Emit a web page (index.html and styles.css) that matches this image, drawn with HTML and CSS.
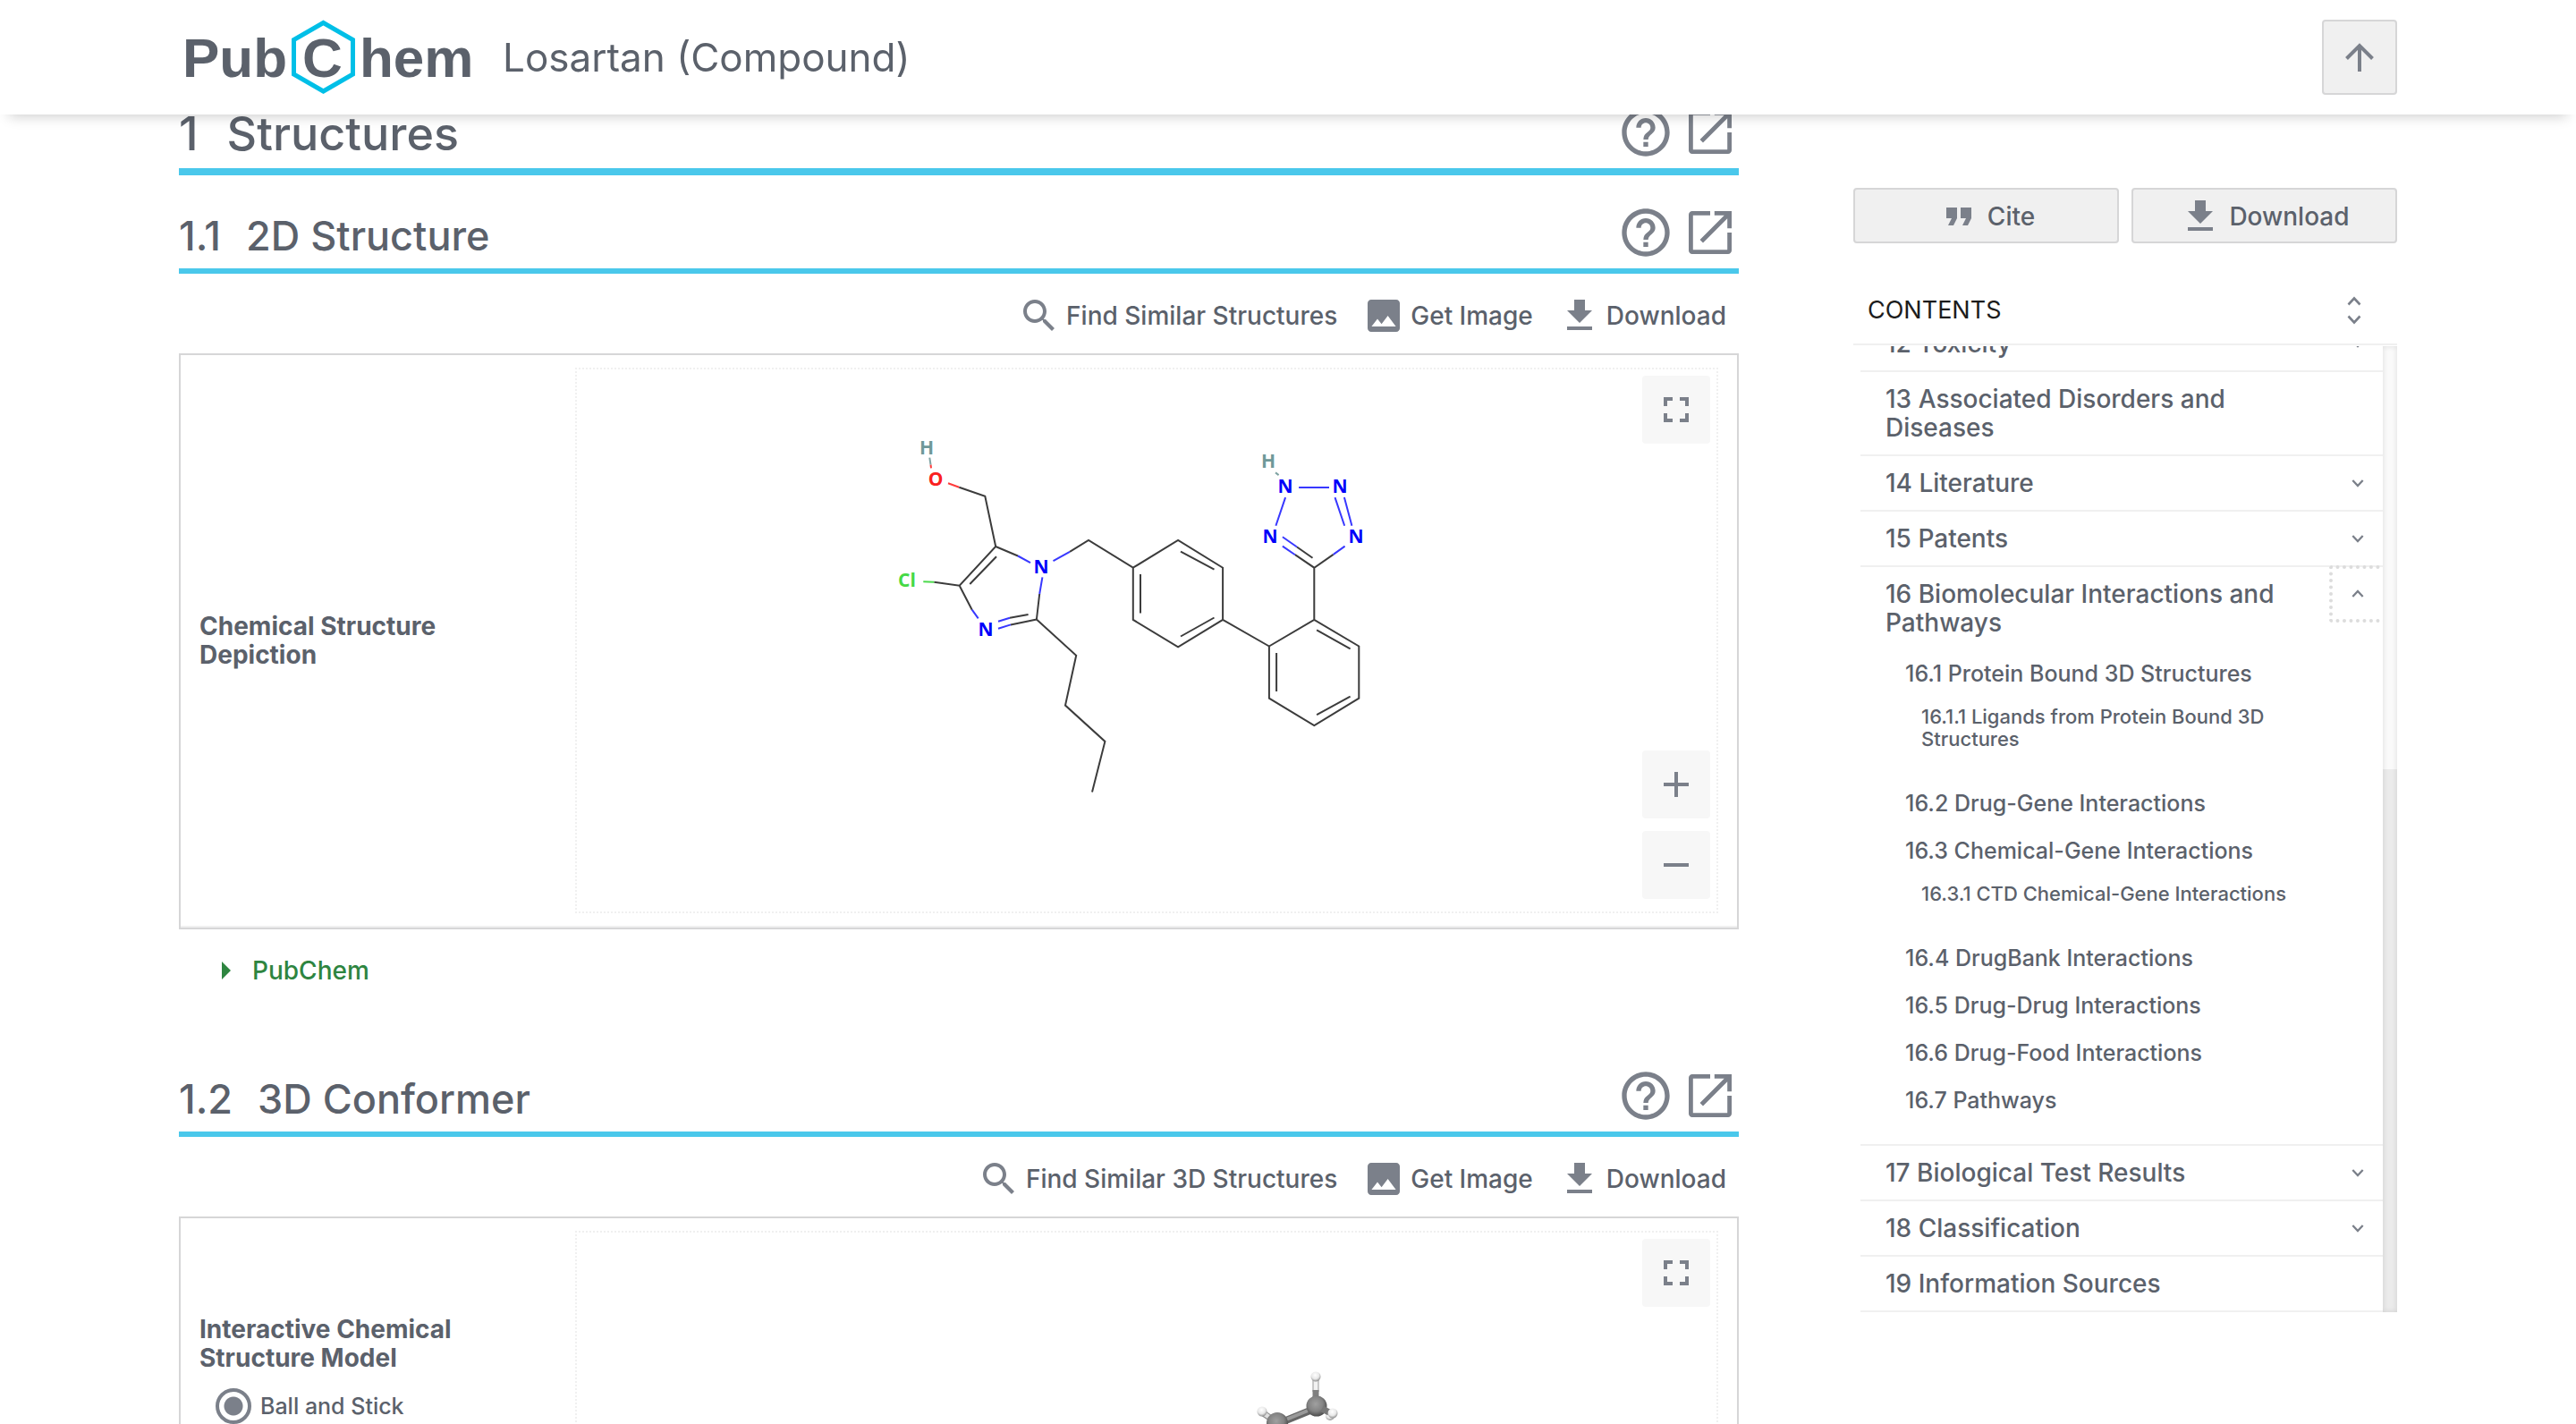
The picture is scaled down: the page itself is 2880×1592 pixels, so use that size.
FILE: index.html
```html
<!DOCTYPE html>
<html lang="en">
<head>
<meta charset="utf-8">
<title>Losartan (Compound) - PubChem</title>
<link rel="stylesheet" href="styles.css">
</head>
<body>
<svg class="sprite" aria-hidden="true">
  <symbol id="i-help" viewBox="0 0 24 24"><path d="M11 18h2v-2h-2v2zm1-16C6.480 2 2 6.480 2 12s4.480 10 10 10 10-4.480 10-10S17.520 2 12 2zm0 18c-4.410 0-8-3.590-8-8s3.590-8 8-8 8 3.590 8 8-3.590 8-8 8zm0-14c-2.210 0-4 1.790-4 4h2c0-1.100.9-2 2-2s2 .9 2 2c0 2-3 1.750-3 5h2c0-2.250 3-2.500 3-5 0-2.210-1.790-4-4-4z"/></symbol>
  <symbol id="i-open" viewBox="0 0 24 24"><path d="M19.200 19.200H4.800V4.800H12V3H4.500C3.600 3 3 3.700 3 4.500v15c0 .8.600 1.500 1.500 1.500h15c.8 0 1.500-.7 1.500-1.500V12h-1.800v7.200zM13.800 3v1.800h4.100L7.700 15l1.300 1.300L19.200 6.100v4.100H21V3h-7.200z"/></symbol>
  <symbol id="i-search" viewBox="0 0 24 24"><path d="M15.500 14h-.79l-.28-.27C15.410 12.590 16 11.110 16 9.500 16 5.910 13.090 3 9.500 3S3 5.910 3 9.500 5.910 16 9.500 16c1.610 0 3.090-.59 4.230-1.570l.27.28v.79l5 4.990L20.490 19l-4.990-5zm-6 0C7.010 14 5 11.990 5 9.500S7.010 5 9.500 5 14 7.010 14 9.500 11.990 14 9.500 14z"/></symbol>
  <symbol id="i-image" viewBox="0 0 24 24"><path d="M21 19V5c0-1.100-.9-2-2-2H5c-1.100 0-2 .9-2 2v14c0 1.100.9 2 2 2h14c1.100 0 2-.9 2-2zM5.200 18l3.300-4.300 2.300 2.900 3.500-4.600L18.800 18H5.200z"/></symbol>
  <symbol id="i-download" viewBox="0 0 24 24"><path d="M19 9h-4V3H9v6H5l7 7 7-7zM5 18v2h14v-2H5z"/></symbol>
  <symbol id="i-quote" viewBox="0 0 24 24"><path d="M6 17h3l2-4V7H5v6h3zm8 0h3l2-4V7h-6v6h3z"/></symbol>
  <symbol id="i-full" viewBox="0 0 24 24"><path d="M7 14H5v5h5v-2H7v-3zm-2-4h2V7h3V5H5v5zm12 7h-3v2h5v-5h-2v3zM14 5v2h3v3h2V5h-5z"/></symbol>
  <symbol id="i-plus" viewBox="0 0 24 24"><path d="M19 13h-6v6h-2v-6H5v-2h6V5h2v6h6v2z"/></symbol>
  <symbol id="i-minus" viewBox="0 0 24 24"><path d="M19 13H5v-2h14v2z"/></symbol>
  <symbol id="i-down" viewBox="0 0 16 16"><path d="M1.500 4.500L8 11.500l6.500-7" fill="none" stroke="currentColor" stroke-width="2.600"/></symbol>
  <symbol id="i-up" viewBox="0 0 16 16"><path d="M1.500 11.500L8 4.500l6.500 7" fill="none" stroke="currentColor" stroke-width="2.600"/></symbol>
</svg>

<header class="topbar">
  <div class="topbar-inner">
    <a class="logo" href="#" aria-label="PubChem">
      <svg viewBox="0 0 340 84" width="340" height="84">
        <path class="hex" d="M159.500 3.500L192.500 22.500V61L159.500 80L126.500 61V22.500Z"/>
        <text x="2" y="64">Pub</text>
        <text x="136" y="64">C</text>
        <text x="200" y="64">hem</text>
      </svg>
    </a>
    <h1 class="title">Losartan (Compound)</h1>
    <button class="to-top" aria-label="Back to top">
      <svg viewBox="0 0 32 32" width="32" height="32"><path d="M16 32V3M1.500 17.500L16 3l14.500 14.500" fill="none" stroke="currentColor" stroke-width="4"/></svg>
    </button>
  </div>
</header>

<div class="page">
  <main class="content">
    <div class="heading heading-top">
      <h2><span class="num">1</span>Structures</h2>
      <div class="heading-tools">
        <a href="#" aria-label="Help"><svg><use href="#i-help"/></svg></a>
        <a href="#" aria-label="Open in new window"><svg><use href="#i-open"/></svg></a>
      </div>
    </div>

    <section class="section">
      <div class="heading">
        <h3><span class="num">1.1</span>2D Structure</h3>
        <div class="heading-tools">
          <a href="#" aria-label="Help"><svg><use href="#i-help"/></svg></a>
          <a href="#" aria-label="Open in new window"><svg><use href="#i-open"/></svg></a>
        </div>
      </div>
      <div class="toolbar">
        <button><svg><use href="#i-search"/></svg>Find Similar Structures</button>
        <button><svg><use href="#i-image"/></svg>Get Image</button>
        <button><svg><use href="#i-download"/></svg>Download</button>
      </div>
      <div class="card">
        <div class="card-label centered"><strong>Chemical Structure Depiction</strong></div>
        <div class="viewer">
          <svg class="molecule" viewBox="979 413 606 606" role="img" aria-label="Losartan 2D structure">
            <g class="c">
              <path d="M1072.300 544.700L1101.300 554.700L1113.200 611L1072.700 654.700L1044.300 650.700M1114 622.300L1084.300 653M1072.700 654.700L1086.700 681.700M1113.200 611L1138 621.500M1158.900 692.500L1162.200 664M1158.900 692.500L1130 698.400M1149.600 686.900L1129 690.800"/>
              <path d="M1196 616.800L1217 604L1266.800 634.700L1317.100 604L1367.100 634.700V692.900L1317.100 723.300L1266.800 692.900V634.700M1275 641.900V685.400M1320 616.600L1357.500 636.700M1357.500 690.500L1320 711.500M1367.100 692.900L1418.900 722.500"/>
              <path d="M1418.900 722.500L1469.300 692.900L1519.300 722.500V780.700L1469.300 811.100L1418.900 780.700ZM1427.100 730V773.100M1472.100 704.300L1509.600 725.300M1509.600 778.700L1472.100 799.200M1469.300 692.900V634.700M1490.700 619.900L1469.300 634.700L1447.900 620.200M1467.500 623.700L1450 611.500"/>
              <path d="M1158.900 692.500L1203.200 732.800L1191 788.600L1235.400 828.900L1221 885.400"/>
            </g>
            <g class="n">
              <path d="M1138 621.500L1152 629.200M1177.500 627.200L1196 616.800M1165.400 645.400L1162.200 664M1130 698.400L1116 702.800M1129 690.800L1116 694.800M1086.700 681.700L1093.700 691.300"/>
              <path d="M1490.700 619.900L1503.600 610.600M1447.900 620.200L1433.900 610.600M1450 611.500L1433.900 600.300M1452.100 545H1486M1437.100 556.100L1426.400 587.700M1502.900 556.100L1511.400 587.700M1492.500 556.100L1503.200 587.700"/>
            </g>
            <path class="o" d="M1060 540.300L1072.300 544.700M1040.500 519.500L1041 523.300"/>
            <path class="cl" d="M1032.300 650.300L1044.300 650.700"/>
            <path class="h" d="M1039.300 511.700L1040.500 519.500M1426 528.400L1429.600 531.100"/>
            <text class="tn" x="1164" y="641">N</text>
            <text class="tn" x="1102" y="711">N</text>
            <text class="tn" x="1437" y="551">N</text>
            <text class="tn" x="1498" y="551">N</text>
            <text class="tn" x="1420" y="607">N</text>
            <text class="tn" x="1516" y="607">N</text>
            <text class="to" x="1046" y="543">O</text>
            <text class="tcl" x="1014" y="656">Cl</text>
            <text class="th" x="1036" y="508">H</text>
            <text class="th" x="1418" y="523">H</text>
          </svg>
          <div class="viewer-top"><button aria-label="Full screen"><svg><use href="#i-full"/></svg></button></div>
          <div class="viewer-bottom">
            <button aria-label="Zoom in"><svg><use href="#i-plus"/></svg></button>
            <button aria-label="Zoom out"><svg><use href="#i-minus"/></svg></button>
          </div>
        </div>
      </div>
      <a class="source" href="#"><svg viewBox="0 0 10 20" width="10" height="20"><path d="M0 0l10 10L0 20z"/></svg>PubChem</a>
    </section>

    <section class="section">
      <div class="heading">
        <h3><span class="num">1.2</span>3D Conformer</h3>
        <div class="heading-tools">
          <a href="#" aria-label="Help"><svg><use href="#i-help"/></svg></a>
          <a href="#" aria-label="Open in new window"><svg><use href="#i-open"/></svg></a>
        </div>
      </div>
      <div class="toolbar">
        <button><svg><use href="#i-search"/></svg>Find Similar 3D Structures</button>
        <button><svg><use href="#i-image"/></svg>Get Image</button>
        <button><svg><use href="#i-download"/></svg>Download</button>
      </div>
      <div class="card">
        <div class="card-label options">
          <strong>Interactive Chemical Structure Model</strong>
          <label class="radio"><input type="radio" name="model" checked>Ball and Stick</label>
        </div>
        <div class="viewer">
          <svg class="molecule" viewBox="979 1378 606 606" role="img" aria-label="Losartan 3D conformer">
            <defs>
              <radialGradient id="carbon" cx="0.450" cy="0.400" r="0.600"><stop offset="0" stop-color="#a0a0a0"/><stop offset="0.600" stop-color="#838383"/><stop offset="1" stop-color="#4c4c4c"/></radialGradient>
              <radialGradient id="hydrogen" cx="0.450" cy="0.350" r="0.650"><stop offset="0" stop-color="#ffffff"/><stop offset="0.600" stop-color="#e8e8e8"/><stop offset="1" stop-color="#8e8e8e"/></radialGradient>
            </defs>
            <path d="M1472 1574L1428 1592" stroke="#666" stroke-width="8"/>
            <path d="M1472 1573L1428 1591" stroke="#999" stroke-width="4"/>
            <path d="M1471 1540V1556" stroke="#999" stroke-width="7"/>
            <path d="M1471 1540V1556" stroke="#f2f2f2" stroke-width="5"/>
            <path d="M1471 1554V1566" stroke="#808080" stroke-width="7"/>
            <circle cx="1471" cy="1539" r="5.500" fill="url(#hydrogen)"/>
            <path d="M1411 1579L1424 1588" stroke="#8e8e8e" stroke-width="7"/>
            <path d="M1411 1579L1420 1585" stroke="#dedede" stroke-width="5"/>
            <circle cx="1411" cy="1578" r="5.500" fill="url(#hydrogen)"/>
            <circle cx="1487" cy="1583" r="5" fill="url(#hydrogen)"/>
            <circle cx="1472" cy="1572" r="11.500" fill="url(#carbon)"/>
            <circle cx="1428" cy="1591" r="12" fill="url(#carbon)"/>
            <path d="M1478 1575L1486 1579" stroke="#777" stroke-width="7"/>
            <circle cx="1490" cy="1580" r="5.500" fill="url(#hydrogen)"/>
          </svg>
          <div class="viewer-top"><button aria-label="Full screen"><svg><use href="#i-full"/></svg></button></div>
        </div>
      </div>
    </section>
  </main>

  <aside class="side">
    <div class="actions">
      <button><svg><use href="#i-quote"/></svg>Cite</button>
      <button><svg><use href="#i-download"/></svg>Download</button>
    </div>
    <div class="contents-head">
      <h2>CONTENTS</h2>
      <button aria-label="Expand or collapse all"><svg><use href="#i-up"/></svg><svg><use href="#i-down"/></svg></button>
    </div>
    <div class="contents">
      <nav class="toc" aria-label="Contents">
        <ul>
          <li><div class="row"><a href="#">12 Toxicity</a><button aria-label="Expand"><svg><use href="#i-down"/></svg></button></div></li>
          <li><div class="row"><a href="#">13 Associated Disorders and Diseases</a></div></li>
          <li><div class="row"><a href="#">14 Literature</a><button aria-label="Expand"><svg><use href="#i-down"/></svg></button></div></li>
          <li><div class="row"><a href="#">15 Patents</a><button aria-label="Expand"><svg><use href="#i-down"/></svg></button></div></li>
          <li>
            <div class="row"><a href="#">16 Biomolecular Interactions and Pathways</a><button class="open" aria-label="Collapse"><svg><use href="#i-up"/></svg></button></div>
            <ul class="level2">
              <li><a href="#">16.1 Protein Bound 3D Structures</a>
                <ul class="level3"><li><a href="#">16.1.1 Ligands from Protein Bound 3D Structures</a></li></ul></li>
              <li><a href="#">16.2 Drug-Gene Interactions</a></li>
              <li><a href="#">16.3 Chemical-Gene Interactions</a>
                <ul class="level3"><li><a href="#">16.3.1 CTD Chemical-Gene Interactions</a></li></ul></li>
              <li><a href="#">16.4 DrugBank Interactions</a></li>
              <li><a href="#">16.5 Drug-Drug Interactions</a></li>
              <li><a href="#">16.6 Drug-Food Interactions</a></li>
              <li><a href="#">16.7 Pathways</a></li>
            </ul>
          </li>
          <li><div class="row"><a href="#">17 Biological Test Results</a><button aria-label="Expand"><svg><use href="#i-down"/></svg></button></div></li>
          <li><div class="row"><a href="#">18 Classification</a><button aria-label="Expand"><svg><use href="#i-down"/></svg></button></div></li>
          <li><div class="row"><a href="#">19 Information Sources</a></div></li>
        </ul>
      </nav>
      <div class="scrollbar"><div class="thumb"></div></div>
    </div>
  </aside>
</div>
</body>
</html>
```
FILE: styles.css
```css
:root {
  --text: #5b616b;
  --icon: #7b808a;
  --accent: #4ac8eb;
  --line: #d6d6d7;
  --soft: #f0f0f0;
}

* { box-sizing: border-box; }

body {
  margin: 0;
  height: 100vh;
  overflow: hidden;
  background: #fff;
  color: var(--text);
  font: 500 28px/36px Inter, "Liberation Sans", sans-serif;
}

h1, h2, h3, ul { margin: 0; padding: 0; font-weight: 500; }
ul { list-style: none; }
a { color: inherit; text-decoration: none; }
svg { display: block; fill: currentColor; flex: none; }
.sprite { position: absolute; width: 0; height: 0; }

button {
  display: flex;
  align-items: center;
  justify-content: center;
  padding: 0;
  border: 0;
  background: none;
  color: var(--text);
  font: inherit;
}
button svg { color: var(--icon); }

/* top bar */
.topbar {
  position: fixed;
  inset: 0 0 auto;
  z-index: 2;
  background: #fff;
  box-shadow: 0 12px 14px -10px rgba(0, 0, 0, 0.2);
}
.topbar-inner {
  display: flex;
  align-items: center;
  height: 128px;
  max-width: 2480px;
  margin: 0 auto;
}
.logo { padding-left: 2px; }
.logo text { font: bold 62px "Liberation Sans", Arial, sans-serif; fill: var(--text); }
.hex { fill: none; stroke: #00bfe7; stroke-width: 5; }
.title { margin-left: 20px; font-size: 44px; line-height: 56px; font-weight: 400; }
.to-top {
  width: 84px;
  height: 84px;
  margin-left: auto;
  border: 2px solid var(--line);
  border-radius: 4px;
  background: var(--soft);
}

/* page columns */
.page {
  display: grid;
  grid-template-columns: minmax(0, 1fr) 608px;
  gap: 128px;
  max-width: 2480px;
  margin: 0 auto;
  padding-top: 116px;
}

/* headings */
.heading {
  display: flex;
  align-items: center;
  justify-content: space-between;
  padding-bottom: 8px;
  border-bottom: 6px solid var(--accent);
}
.heading-top { border-bottom-width: 8px; margin-bottom: 32px; }
.heading h2 { padding-top: 4px; font-size: 52px; line-height: 60px; }
.heading h2 .num { margin-right: 32px; }
.heading h3 { padding-top: 8px; font-size: 45px; line-height: 56px; }
.num { margin-right: 28px; }
.heading-tools { display: flex; gap: 8px; color: var(--icon); }
.heading-tools svg { width: 64px; height: 64px; }

.toolbar {
  display: flex;
  justify-content: flex-end;
  gap: 28px;
  padding: 23px 14px 18px 0;
}
.toolbar button { gap: 6px; }
.toolbar svg { width: 48px; height: 48px; }

/* data card */
.card {
  display: grid;
  grid-template-columns: 420px minmax(0, 1fr);
  padding: 14px 21px 16px;
  border: 2px solid var(--line);
  box-shadow: inset 0 -2px var(--soft);
}
.card-label { line-height: 32px; }
.card-label strong { display: block; width: 300px; font-weight: 700; }
.centered { align-self: center; }
.options { padding-top: 94px; }
.radio {
  display: flex;
  align-items: center;
  gap: 10px;
  margin-top: 18px;
  padding-left: 18px;
  font-size: 25px;
}
.radio input {
  appearance: none;
  width: 40px;
  height: 40px;
  margin: 0;
  border: 4px solid var(--icon);
  border-radius: 50%;
  background: radial-gradient(circle, var(--icon) 10px, transparent 11px);
}

.viewer {
  position: relative;
  display: flex;
  justify-content: center;
  border: 2px dotted var(--soft);
}
.molecule { width: 606px; height: 606px; }
.viewer-top, .viewer-bottom {
  position: absolute;
  right: 7px;
  display: grid;
  gap: 14px;
}
.viewer-top { top: 7px; }
.viewer-bottom { bottom: 14px; }
.viewer button { width: 76px; height: 76px; border-radius: 4px; background: #f7f7f7; }
.viewer button svg { width: 48px; height: 48px; }

.molecule .c, .molecule .n, .o, .cl, .h { fill: none; stroke-width: 2; }
.c { stroke: #3c3c3c; }
.n { stroke: #3838ff; }
.o { stroke: #ff3c3c; }
.cl { stroke: #4cd94c; }
.h { stroke: #7fa3a3; }
.molecule text { font: bold 21px "Open Sans", "DejaVu Sans", sans-serif; text-anchor: middle; }
.tn { fill: #0000fa; }
.to { fill: #fa2020; }
.tcl { fill: #45d945; }
.th { fill: #6f9999; }

.source {
  display: flex;
  align-items: center;
  gap: 24px;
  margin: 28px 0 90px;
  padding-left: 48px;
  color: #2e8540;
}

/* sidebar */
.side { padding-top: 94px; }
.actions { display: grid; grid-template-columns: 1fr 1fr; gap: 14px; }
.actions button {
  gap: 8px;
  height: 62px;
  padding-top: 2px;
  border: 2px solid var(--line);
  border-radius: 4px;
  background: var(--soft);
}
.actions svg { width: 48px; height: 48px; }

.contents-head {
  display: flex;
  align-items: center;
  justify-content: space-between;
  margin-top: 57px;
  padding: 0 40px 19px 16px;
  border-bottom: 2px solid var(--soft);
}
.contents-head h2 { font-size: 27px; font-weight: 400; color: #1c1c1c; }
.contents-head button { flex-direction: column; gap: 4px; }
.contents-head svg { width: 16px; height: 16px; }

.contents {
  display: flex;
  height: calc(100vh - 512px);
  margin-top: 1px;
}
.toc {
  flex: 1;
  display: flex;
  flex-direction: column;
  justify-content: flex-end;
  padding-left: 8px;
  overflow: hidden;
  line-height: 32px;
}
.toc > ul > li { border-bottom: 2px solid var(--soft); }
.row {
  display: flex;
  align-items: flex-start;
  justify-content: space-between;
  padding: 14px 0 14px 28px;
}
.row a { max-width: 460px; }
.row button { width: 64px; height: 60px; margin: -14px -4px -14px 0; }
.row button svg { width: 14px; height: 14px; }
.row .open {
  height: 64px;
  border: 4px dotted #dcdcdc;
  border-radius: 4px;
  margin-top: -16px;
}

.level2 { padding: 0 90px 23px 50px; font-size: 25px; }
.level2 > li > a { display: block; padding: 11px 0 10px; }
.level3 { padding: 10px 0 32px 18px; font-size: 22px; line-height: 25px; }
.level3 a { display: block; }

.scrollbar {
  width: 16px;
  padding-top: 473px;
  background: #fafafa;
  box-shadow: inset 0 0 6px rgba(0, 0, 0, 0.12);
}
.thumb { height: 100%; background: rgba(0, 0, 0, 0.06); }
```
